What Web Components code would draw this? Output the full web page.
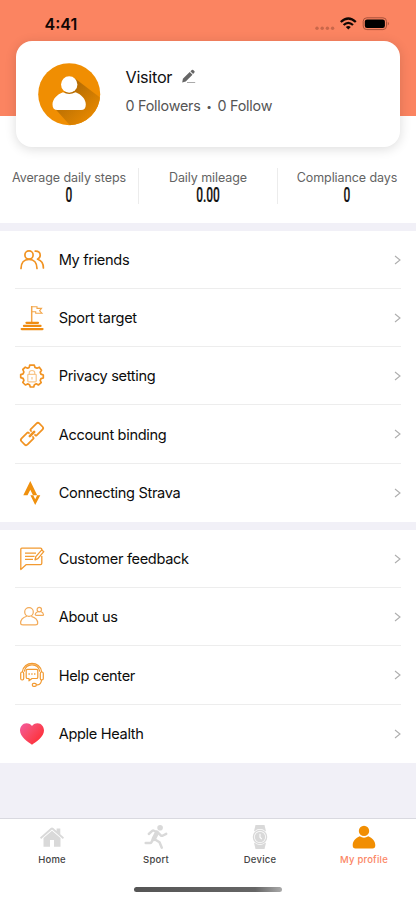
<!DOCTYPE html>
<html lang="en">
<head>
<meta charset="utf-8">
<title>My profile</title>
<style>
html,body{margin:0;padding:0}
body{width:416px;height:900px;overflow:hidden;background:#f1f0f7;font-family:Inter,"Liberation Sans",sans-serif;color:#101010}
</style>
</head>
<body>
<profile-app></profile-app>
<script>
const icons = {
friends:`<g fill="none" stroke="#f19322" stroke-width="1.7" stroke-linecap="round"><circle cx="9" cy="7" r="4.1"/><path d="M1 20.500C1 15 4 11.300 9 11.300S17 15 17 20.500M15.200 3.100C18.600 2.900 20.200 4.900 20.200 7.200C20.200 9 19 10.400 17.500 11.200M17.800 11.300C21.500 12.600 23.400 15.400 23.400 20"/></g>`,
target:`<path d="M11.700 0V16" stroke="#f3a64a" stroke-width="1.500"/><path d="M12 .8H17V2.400H21.500L19.600 4.800L22 7.300H15.700V5.700H12" fill="none" stroke="#f3a64a" stroke-width="1.100"/><path d="M6.500 16.800H18M4 19.900H20.500M1.700 23.100H22.500" stroke="#ef8c12" stroke-width="2.300" stroke-linecap="round"/>`,
privacy:`<path fill="none" stroke="#f19322" stroke-width="1.700" stroke-linejoin="round" d="M9.700 1.200H14.300L15 3.400L17 4.200L19.300 3.200L21.500 6.200L20.200 8.300L20.900 10.100L23.300 11V14L21 14.600L20.200 16.500L21.200 18.700L18.400 21L16.300 19.800L14.400 20.700L13.700 23H10.300L9.600 20.700L7.600 19.900L5.400 21L2.800 18.500L3.900 16.400L3.100 14.400L.7 13.600V10.600L3.100 9.900L3.900 8L2.800 5.500L5.300 3.200L7.600 4.200L9.200 3.400Z"/><g fill="none" stroke="#f8c68b" stroke-width="1.200"><rect x="7.800" y="10.300" width="8.400" height="7.500" rx=".8"/><path d="M9.300 10V8.600C9.300 5.800 14.700 5.800 14.700 8.600V10M12 13V15.500"/></g>`,
link:`<g fill="none" stroke="#f19322" stroke-width="2" stroke-linejoin="round" transform="rotate(-45 12 12) translate(12 12) scale(.87) translate(-12 -12)"><path d="M10.300 9.700V8Q10.300 7.100 9.400 7.100H0Q-2.500 7.100-2.500 9.300V14.700Q-2.500 16.900 0 16.900H9.400Q10.300 16.900 10.300 16V14.300M13.700 9.700V8Q13.700 7.100 14.600 7.100H24Q26.500 7.100 26.500 9.300V14.700Q26.500 16.900 24 16.900H14.600Q13.700 16.900 13.700 16V14.300"/><path d="M8.500 12H15.500" stroke-width="3" stroke-linecap="round"/></g>`,
strava:`<path fill="#ef900e" fill-rule="evenodd" d="M10.300 0L3.300 14.200H7.500L10.300 8.800L13 14.200H10.400L15.200 24L20.300 14.200H17.200L15.200 18.200L13.200 14.200H17.200L10.300 0Z"/>`,
feedback:`<g fill="none" stroke="#f29a31" stroke-width="1.300" stroke-linejoin="round"><path d="M21.800 3V2.200Q21.800 1.200 20.600 1.200H1.800Q.8 1.200.8 2.200V22.500L6.300 17.600H20.500Q21.800 17.600 21.800 16.300V9M5 6.100H16M5 9.300H14.500M5 12.400H13"/><path d="M15 12.800L15.800 9.600L21.800 2.900L23.800 4.700L17.900 11.600Z" fill="#fff"/></g>`,
about:`<g fill="none" stroke="#f3ab59" stroke-width="1.200"><circle cx="9" cy="7" r="4.300"/><path d="M6.800 11.300C3 12.500.6 15.500.6 18Q.6 19.900 3 19.900H15.300Q17.700 19.900 17.700 18C17.600 15 15 12.300 11.300 11.300"/><circle cx="19.300" cy="4.600" r="2.200"/><path d="M17.900 6.500C16.300 7.400 15.200 8.700 15.200 9.600Q15.200 10.400 16.400 10.400H22.300Q23.600 10.400 23.500 9.500C23.300 8.300 22.200 7 20.700 6.500"/></g>`,
help:`<g fill="none" stroke="#f29a31" stroke-width="1.200" stroke-linejoin="round"><path d="M2.300 9C3.700-2.600 20.300-2.600 21.700 9M4.200 8.700C6-.4 18 -.4 19.800 8.700M21.500 16.800Q21.300 21.600 17.500 21.900H16.300"/><rect x=".7" y="9" width="3" height="8" rx="1.400"/><rect x="20.300" y="9" width="3" height="8" rx="1.400"/><rect x="12.300" y="20.300" width="4" height="3" rx="1.400"/><path d="M7.500 6.300H16.500Q17.800 6.300 17.800 7.600V14.200Q17.800 15.500 16.500 15.500H12L9 17.800V15.500H7.500Q6.200 15.500 6.200 14.200V7.600Q6.200 6.300 7.500 6.300Z"/><path d="M8.500 11H15.600" stroke-width="1.500" stroke-dasharray="1.300 1.500"/></g>`,
health:`<defs><linearGradient id="h" x1="0" y1="0" x2="1" y2=".8"><stop stop-color="#f45aa0"/><stop offset=".45" stop-color="#f84b69"/><stop offset="1" stop-color="#ff2a30"/></linearGradient></defs><path fill="url(#h)" d="M12 22.700C8 20.200 0 15 0 8.600C0 4.600 2.800 1.200 6.400 1.200C9 1.200 11 2.400 12 3.900C13 2.400 15 1.200 17.600 1.200C21.200 1.200 24 4.600 24 8.600C24 15 16 20.200 12 22.700Z"/>`,
home:`<path fill="#d9d9d9" d="M0 12.600L10.700 3.100Q12 2 13.300 3.100L16.600 6V3.500H20.300V9.300L24 12.600L22.900 13.900L12 4.500L1.100 13.900ZM3.500 13.100L12 5.800L20.500 13.100V21.800H14V14.900H10V21.800H3.500Z"/>`,
sport:`<circle cx="16.100" cy="2.700" r="2.800" fill="#d9d9d9"/><g fill="none" stroke="#d9d9d9" stroke-linecap="round" stroke-linejoin="round"><path d="M4.800 9L8.200 5.900Q9 5.200 10 5.700L13 7.200" stroke-width="2.400"/><path d="M13 7.700L9.700 14" stroke-width="4.500"/><path d="M14.800 8.400L17 10.600Q18 11.100 19 10.500L22.200 8.800M8.900 14.500L7.500 17.100Q7 18 6 18H1.700M11 14.500L15.500 17.300L17.800 22.700" stroke-width="2.500"/></g>`,
watch:`<path d="M7.500 0H16.500L18 6.300H6ZM6 17.800H18L16.500 24H7.500Z" fill="#d9d9d9"/><circle cx="12" cy="12" r="7.900" fill="#fff"/><circle cx="12" cy="12" r="6.600" fill="none" stroke="#d9d9d9" stroke-width="1.300"/><circle cx="12" cy="12" r="5.200" fill="#d9d9d9"/><path d="M12 8.800V12.200L13.800 14.100" stroke="#fff" stroke-width="1.100" fill="none"/>`,
person:`<g fill="#f18e02"><circle cx="12" cy="5.900" r="5.200"/><path d="M7.700 11.300Q12 14 16.300 11.300C20.200 12.800 23.300 16.200 23.300 20.300Q23.300 23.500 20.500 23.500H3.500Q.7 23.500.7 20.300C.7 16.200 3.800 12.800 7.700 11.300Z"/></g>`
};
function define(name, build){
  customElements.define(name, class extends HTMLElement{
    connectedCallback(){
      if(this.shadowRoot) return;
      const t=document.createElement('template');
      t.innerHTML=build(this);
      this.attachShadow({mode:'open'}).append(t.content.cloneNode(true));
    }
  });
}
define('ui-icon', e=>`<style>:host{display:block;width:24px;height:24px;flex:none}svg{display:block;overflow:visible}</style><svg width="100%" height="100%" viewBox="0 0 24 24">${icons[e.getAttribute('name')]}</svg>`);
define('status-bar', ()=>`<style>
:host{display:flex;height:40px;box-sizing:border-box;padding:15px 26px 0 44.500px;justify-content:space-between;color:#100704;font-size:16px;line-height:18px;font-weight:600}
.r{display:block;margin-top:2px}</style>
<span>4:41</span><svg class="r" width="75" height="14" viewBox="0 0 75 14"><g fill="#c9674a"><circle cx="2" cy="11.200" r="1.700"/><circle cx="7.200" cy="11.200" r="1.700"/><circle cx="12.400" cy="11.200" r="1.700"/><circle cx="17.600" cy="11.200" r="1.700"/></g><g fill="none" stroke="#100704" stroke-width="2.300"><path d="M25.800 5Q33.300-2.100 40.800 5"/><path d="M28.600 8Q33.300 3.700 38 8"/></g><path d="M30.800 10Q33.300 7.800 35.800 10L33.300 12.600Z" fill="#100704"/><rect x="48.200" y=".8" width="23.300" height="11.800" rx="3.600" fill="none" stroke="#a75139"/><rect x="49.800" y="2.400" width="20.100" height="8.600" rx="2.200" fill="#000"/><path d="M72.800 4.800Q75 6.700 72.800 8.600Z" fill="#a75139"/></svg>`);
define('user-card', ()=>`<style>
:host{display:flex;box-sizing:border-box;margin:.500px 16px 0;height:106.500px;border-radius:16px;background:#fff;box-shadow:0 2px 12px rgba(0,0,0,.14);padding:22px 22px 0;gap:24.500px}
.a{width:63px;height:63px;flex:none}.info{padding-top:3.500px}.name{display:flex;align-items:center;gap:9px;font-size:16.300px;line-height:22px;height:22px;color:#111;letter-spacing:-.3px}
.f{display:flex;margin-top:8px;color:#555;font-size:14.300px;line-height:20px;letter-spacing:-.22px}.pen{margin-top:-1px}.dot{display:flex;width:17px;align-items:center;justify-content:center;font-size:10px;line-height:20px}</style>
<svg class="a" viewBox="0 0 63 63"><defs><linearGradient id="s" x1="25" y1="20" x2="56" y2="52" gradientUnits="userSpaceOnUse"><stop stop-color="#a76505"/><stop offset="1" stop-color="#e68800"/></linearGradient><clipPath id="c"><circle cx="31.200" cy="31.200" r="31"/></clipPath></defs><g clip-path="url(#c)"><rect width="63" height="63" fill="#f08e02"/><path d="M37 15.500L66 37.500V73.500H42L16 44.500Z" fill="url(#s)"/></g><circle cx="31.200" cy="21.500" r="8.200" fill="#fff"/><path d="M25 29.200Q31.200 32.800 37.500 29.200C43.500 31.500 47.800 36 47.800 41.500Q47.800 47 43 47H19.500Q14.500 47 14.500 41.500C14.500 36 19 31.500 25 29.200Z" fill="#fff"/></svg>
<div class="info"><div class="name"><span><slot name="name"></slot></span><svg class="pen" width="16" height="15" viewBox="0 0 16 15"><path d="M1.200 13.500L1.900 9.800L8.700 3L11.500 5.700L4.700 12.600Z M9.400 2.300L10.900.9Q11.500.4 12.200 1L13.500 2.300Q14 3 13.400 3.600L12.100 5Z" fill="#666"/><path d="M6 13.500H14.200" stroke="#aaa"/></svg></div><div class="f"><slot name="followers"></slot><span class="dot">•</span><slot name="follow"></slot></div></div>`);
define('stat-item', e=>`<style>:host{display:block;flex:1;text-align:center;padding-top:2px;height:36px;box-sizing:border-box}.l{font-size:12.500px;line-height:16px;color:#636363;letter-spacing:-.08px;white-space:nowrap}.v{font:500 19.300px/20px Roboto,sans-serif;color:#111;transform:translateY(.3px) scaleX(.62);-webkit-text-stroke:.2px #111}</style><div class="l"><slot></slot></div><div class="v">${e.getAttribute('value')}</div>`);
define('stats-bar', ()=>`<style>:host{display:flex;height:75.500px;box-sizing:border-box;padding-top:21px}::slotted(*){border-right:1px solid #ececec}::slotted(:last-child){border-right:0}</style><slot></slot>`);
define('menu-row', e=>`<style>
:host{display:flex;align-items:center;height:58.250px;box-sizing:border-box;margin:0 15px;padding:1px 0 0 5px;border-bottom:1px solid #ededed}
:host(:last-child){border-color:transparent}
.t{flex:1;margin-left:14.700px;padding-top:.5px;font-size:14.600px;line-height:20px;color:#0c0c0c;letter-spacing:-.34px}svg{display:block}</style>
<ui-icon name="${e.getAttribute('icon')}"></ui-icon><span class="t"><slot></slot></span><svg width="7" height="10" viewBox="0 0 7 10"><path d="M1 1L6 5L1 9" stroke="#aeaeae" fill="none" stroke-width="1.100"/></svg>`);
define('menu-group', ()=>`<style>:host{display:block;background:#fff;margin-top:8px}</style><slot></slot>`);
define('tab-item', e=>`<style>:host{display:flex;flex:1;flex-direction:column;align-items:center;padding-top:6px;color:#444;font-size:9.500px;line-height:14px;font-weight:500;letter-spacing:.2px}:host([active]){color:#fb8664}.x{margin-top:4px}</style><ui-icon name="${e.getAttribute('icon')}"></ui-icon><span class="x"><slot></slot></span>`);
define('tab-bar', ()=>`<style>:host{display:flex;flex-direction:column;height:82px;box-sizing:border-box;border-top:1px solid #d9d9e0;background:#fff}.tabs{display:flex;height:68px}.bar{width:148px;height:4.500px;border-radius:3px;align-self:center;background:linear-gradient(90deg,#555,#666 82%,#aaa)}</style><div class="tabs"><slot></slot></div><div class="bar"></div>`);
define('profile-app', ()=>`<style>
:host{display:flex;flex-direction:column;width:416px;height:900px;background:#f1f0f7}
.top{height:147px;position:relative;background:linear-gradient(#fb8461 116px,#fff 116px)}stats-bar{background:#fff}.space{flex:1}tab-bar{flex:none}</style>
<div class="top"><status-bar></status-bar><user-card><span slot="name">Visitor</span><span slot="followers">0 Followers</span><span slot="follow">0 Follow</span></user-card></div>
<stats-bar><stat-item value="0">Average daily steps</stat-item><stat-item value="0.00">Daily mileage</stat-item><stat-item value="0">Compliance days</stat-item></stats-bar>
<menu-group><menu-row icon="friends">My friends</menu-row><menu-row icon="target">Sport target</menu-row><menu-row icon="privacy">Privacy setting</menu-row><menu-row icon="link">Account binding</menu-row><menu-row icon="strava">Connecting Strava</menu-row></menu-group>
<menu-group><menu-row icon="feedback">Customer feedback</menu-row><menu-row icon="about">About us</menu-row><menu-row icon="help">Help center</menu-row><menu-row icon="health">Apple Health</menu-row></menu-group>
<div class="space"></div>
<tab-bar><tab-item icon="home">Home</tab-item><tab-item icon="sport">Sport</tab-item><tab-item icon="watch">Device</tab-item><tab-item icon="person" active>My profile</tab-item></tab-bar>`);
</script>
</body>
</html>
